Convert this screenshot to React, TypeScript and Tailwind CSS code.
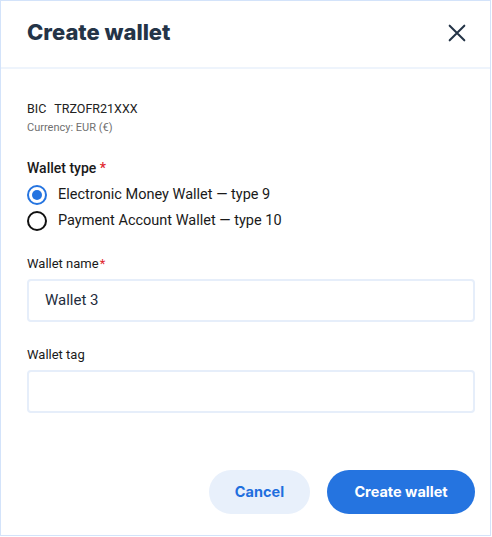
import React from "react";

export default function App() {
  return (
    <div className="w-[491px] h-[536px] border border-[#d3e3fa] bg-white flex flex-col" style={{ fontFamily: "Roboto, 'Liberation Sans', sans-serif" }}>
      <div className="h-[68px] shrink-0 border-b-2 border-[#eef4fc] flex items-center justify-between pl-[26px] pr-[22px]">
        <h1 className="text-[22px] font-extrabold text-[#243447] -mt-[3px]" style={{ fontFamily: "Inter, 'Noto Sans', sans-serif" }}>Create wallet</h1>
        <svg width="22" height="22" viewBox="0 0 24 24" fill="none" stroke="#243447" strokeWidth="2.2" strokeLinecap="round" className="-mt-[3px]">
          <path d="M4 4 L20 20 M20 4 L4 20" />
        </svg>
      </div>
      <div className="flex-1 flex flex-col pl-[26px] pr-[15px] pt-[31px]">
        <div className="text-[12.5px] leading-[18px] text-[#222]">
          BIC<span className="ml-[8px]">TRZOFR21XXX</span>
        </div>
        <div className="text-[11px] leading-[15px] text-[#707070] mt-[2px]">Currency: EUR (€)</div>

        <div className="mt-[23px] text-[14px] leading-[20px] font-medium text-[#1a1a1a]">
          Wallet type <span className="text-[#e0262e]">*</span>
        </div>
        <div className="flex flex-col mt-[4px]">
          <label className="flex items-center h-[26px]">
            <span className="w-[20px] h-[20px] rounded-full border-2 border-[#2574e0] flex items-center justify-center">
              <span className="w-[10px] h-[10px] rounded-full bg-[#2574e0]" />
            </span>
            <span className="ml-[11px] text-[14.5px] text-[#1a1a1a]">Electronic Money Wallet — type 9</span>
          </label>
          <label className="flex items-center h-[26px]">
            <span className="w-[20px] h-[20px] rounded-full border-2 border-[#111]" />
            <span className="ml-[11px] text-[14.5px] text-[#1a1a1a]">Payment Account Wallet — type 10</span>
          </label>
        </div>

        <div className="mt-[21px] text-[13px] leading-[18px] text-[#1a1a1a]">
          Wallet name<span className="text-[#e0262e] ml-[1px]">*</span>
        </div>
        <div className="mt-[6px] h-[43px] rounded-[4px] border-2 border-[#e6eefa] flex items-center px-[16px] text-[15px] text-[#1f2d3d]">
          Wallet 3
        </div>

        <div className="mt-[24px] text-[13px] leading-[18px] text-[#1a1a1a]">Wallet tag</div>
        <div className="mt-[6px] h-[43px] rounded-[4px] border-2 border-[#e6eefa]" />

        <div className="mt-auto mb-[21px] flex justify-end gap-[17px]">
          <button className="h-[44px] w-[101px] rounded-full bg-[#e8f0fb] text-[#1f6fde] text-[14.5px] font-bold" style={{ fontFamily: "Inter, 'Noto Sans', sans-serif" }}>Cancel</button>
          <button className="h-[44px] w-[148px] rounded-full bg-[#2574e0] text-white text-[14.5px] font-bold" style={{ fontFamily: "Inter, 'Noto Sans', sans-serif" }}>Create wallet</button>
        </div>
      </div>
    </div>
  );
}
